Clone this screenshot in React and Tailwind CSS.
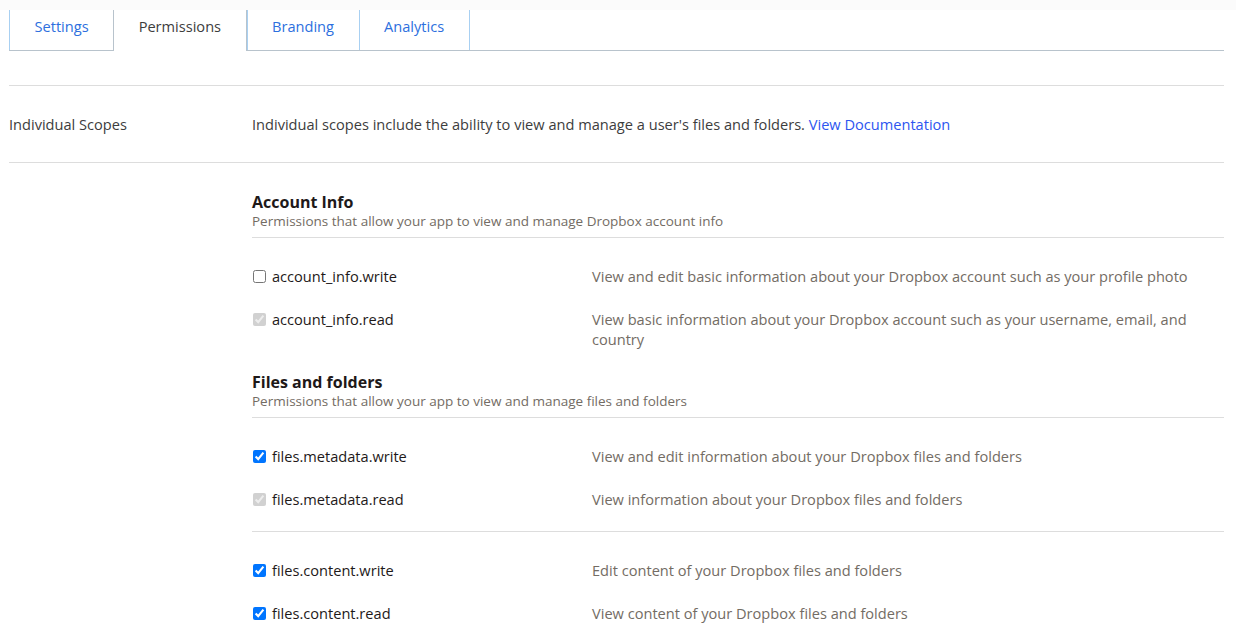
import React from 'react';

const tabs = ['Settings', 'Permissions', 'Branding', 'Analytics'];

const groups = [
  {
    title: 'Account Info',
    subtitle: 'Permissions that allow your app to view and manage Dropbox account info',
    sets: [
      [
        { name: 'account_info.write', desc: 'View and edit basic information about your Dropbox account such as your profile photo', checked: false },
        { name: 'account_info.read', desc: 'View basic information about your Dropbox account such as your username, email, and country', checked: true, disabled: true },
      ],
    ],
  },
  {
    title: 'Files and folders',
    subtitle: 'Permissions that allow your app to view and manage files and folders',
    sets: [
      [
        { name: 'files.metadata.write', desc: 'View and edit information about your Dropbox files and folders', checked: true },
        { name: 'files.metadata.read', desc: 'View information about your Dropbox files and folders', checked: true, disabled: true },
      ],
      [
        { name: 'files.content.write', desc: 'Edit content of your Dropbox files and folders', checked: true },
        { name: 'files.content.read', desc: 'View content of your Dropbox files and folders', checked: true },
      ],
    ],
  },
];

const Scope = ({ scope }) => (
  <div className="flex items-start">
    <label className="flex w-[340px] shrink-0 items-center gap-[6px] text-[14.6px] leading-[20px] text-[#1e1919]">
      <input
        type="checkbox"
        defaultChecked={scope.checked}
        disabled={scope.disabled}
        className="m-0 ml-[1px] h-[13px] w-[13px]"
      />
      {scope.name}
    </label>
    <p className="text-[14.6px] leading-[20px] text-[#736c64]">{scope.desc}</p>
  </div>
);

export default function App() {
  return (
    <div className="min-h-screen bg-white pr-3 pl-[9px] text-[#1e1919]" style={{ fontFamily: '"Open Sans", sans-serif' }}>
      <div className="-ml-[9px] -mr-3 h-[10px] bg-[#fbfbfb]" />
      <div className="flex h-[41px] border-b border-[#b8c3cc]">
        {tabs.map((t, i) => {
          const active = t === 'Permissions';
          return (
            <div
              key={t}
              className={
                active
                  ? '-mb-px flex items-start border-x border-[#b8c3cc] bg-white px-[24.5px] pt-[6px] text-[14.6px] text-[#3d3d3d]'
                  : 'flex items-start border-l border-[#a8d0f2] px-[24.5px] pt-[6px] text-[14.6px] text-[#2d6fde]' +
                    (i === tabs.length - 1 ? ' border-r' : '')
              }
            >
              {t}
            </div>
          );
        })}
      </div>

      <div className="mt-[34px] border-t border-[#dddddd]" />
      <div className="flex items-center py-[28px] text-[14.6px] leading-[20px]">
        <div className="w-[243px] shrink-0 text-[#3d3d3d]">Individual Scopes</div>
        <div className="text-[#3d3d3d]">
          Individual scopes include the ability to view and manage a user's files and folders.{' '}
          <a className="text-[#2d55f0]">View Documentation</a>
        </div>
      </div>
      <div className="border-t border-[#dddddd]" />

      <div className="ml-[243px] pt-[29px]">
        {groups.map((g) => (
          <div key={g.title}>
            <h3 className="text-[16px] font-bold leading-[20px] text-[#1e1919]">{g.title}</h3>
            <p className="pb-[7px] text-[13.5px] leading-[18px] text-[#736c64]">{g.subtitle}</p>
            {g.sets.map((set, si) => (
              <div key={si} className="flex flex-col gap-[23px] border-t border-[#dddddd] pt-[28px] pb-[22px] last:pb-[23px]">
                {set.map((s) => (
                  <Scope key={s.name} scope={s} />
                ))}
              </div>
            ))}
          </div>
        ))}
      </div>
    </div>
  );
}
